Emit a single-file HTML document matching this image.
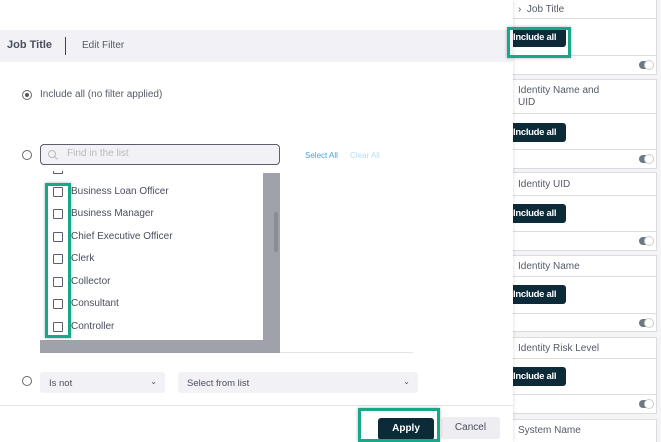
<!DOCTYPE html>
<html><head><meta charset="utf-8"><style>
*{box-sizing:border-box;margin:0;padding:0}
html,body{overflow:hidden}
body{width:661px;height:442px;background:#f4f4f6;font-family:"Liberation Sans",sans-serif;font-size:10px;color:#4a4e5e;position:relative}
.a{position:absolute}
.card{position:absolute;left:500px;width:157px;background:#fff;border:1px solid #dcdce0}
.row{border-bottom:1px solid #dcdce0;position:relative}
.row:last-child{border-bottom:none}
.btn{position:absolute;left:8px;background:#0c2a38;color:#fff;font-weight:bold;font-size:9.5px;border-radius:3px;padding:0 0 0 4px;height:19px;line-height:19px;width:57px;white-space:nowrap;letter-spacing:-0.3px;overflow:hidden}
.tg{position:absolute;right:3px;width:14px;height:8px;border-radius:4px;background:#6b7b80}
.tg:after{content:"";position:absolute;right:-1px;top:-1px;width:8px;height:8px;border-radius:50%;background:#fff;border:1px solid #ccc}
.ttl{font-size:10px;color:#555a68;padding-left:17px}
.cb{position:absolute;left:53px;width:10px;height:10px;border:1px solid #5a5e6e;border-radius:1px;background:#fff}
.it{position:absolute;left:71px;font-size:10px;color:#4a4e5e}
.hl{position:absolute;border:3px solid #17a88a;box-shadow:0 0 3px rgba(0,0,0,.3)}
</style></head><body>
<div class="a" style="left:484px;top:0;width:16px;height:442px;background:#ececef;border-left:1px solid #d8d8dc"></div>
<div class="a" style="left:496px;top:0;width:1px;height:30px;background:#d0d0d4"></div>

<div class="card" style="top:-1px;height:76px">
<div class="row" style="height:19px"><span class="ttl" style="line-height:19px">› &nbsp;Job Title</span></div>
<div class="row" style="height:37px"><div class="btn" style="top:9px">Include all</div></div>
<div class="row" style="height:18px"><div class="tg" style="top:5px"></div></div></div>

<div class="card" style="top:79px;height:90px">
<div class="row" style="height:34px"><div class="ttl" style="padding-top:5px;line-height:12px">Identity Name and<br>UID</div></div>
<div class="row" style="height:36px"><div class="btn" style="top:9px">Include all</div></div>
<div class="row" style="height:18px"><div class="tg" style="top:5px"></div></div></div>

<div class="card" style="top:172px;height:79px">
<div class="row" style="height:23px"><span class="ttl" style="line-height:23px">Identity UID</span></div>
<div class="row" style="height:36px"><div class="btn" style="top:8px">Include all</div></div>
<div class="row" style="height:18px"><div class="tg" style="top:5px"></div></div></div>

<div class="card" style="top:255px;height:77px">
<div class="row" style="height:21px"><span class="ttl" style="line-height:21px">Identity Name</span></div>
<div class="row" style="height:37px"><div class="btn" style="top:8px">Include all</div></div>
<div class="row" style="height:18px"><div class="tg" style="top:5px"></div></div></div>

<div class="card" style="top:337px;height:77px">
<div class="row" style="height:21px"><span class="ttl" style="line-height:21px">Identity Risk Level</span></div>
<div class="row" style="height:36px"><div class="btn" style="top:8px">Include all</div></div>
<div class="row" style="height:18px"><div class="tg" style="top:5px"></div></div></div>

<div class="card" style="top:419px;height:24px">
<div class="row" style="height:21px"><span class="ttl" style="line-height:21px">System Name</span></div></div>

<div class="a" style="left:0;top:0;width:513px;height:442px;background:#fff;box-shadow:1px 0 3px rgba(0,0,0,.1)"></div>
<div class="a" style="left:0;top:30px;width:513px;height:32px;background:#f2f2f6"></div>
<div class="a" style="left:7px;top:39px;font-weight:bold;font-size:11px;color:#4a4e5e">Job Title</div>
<div class="a" style="left:65px;top:37px;width:1px;height:18px;background:#444"></div>
<div class="a" style="left:82px;top:40px;font-size:10px;color:#555a68">Edit Filter</div>

<div class="a" style="left:22px;top:90px;width:10px;height:10px;border:1px solid #666;border-radius:50%"></div>
<div class="a" style="left:25px;top:93px;width:4px;height:4px;background:#555;border-radius:50%"></div>
<div class="a" style="left:40px;top:89px;font-size:10px;color:#555a68">Include all (no filter applied)</div>

<div class="a" style="left:22px;top:150px;width:10px;height:10px;border:1px solid #666;border-radius:50%"></div>
<div class="a" style="left:40px;top:144px;width:240px;height:21px;border:1px solid #5a5e6e;border-radius:4px;background:#f2f2f6"></div>
<svg class="a" style="left:47px;top:149px" width="12" height="12"><circle cx="5" cy="5" r="3.5" fill="none" stroke="#bbb"/><line x1="7.5" y1="7.5" x2="10.5" y2="10.5" stroke="#bbb"/></svg>
<div class="a" style="left:67px;top:148px;font-size:10px;color:#b8b8c0">Find in the list</div>
<div class="a" style="left:305px;top:151px;font-size:8px;color:#4aa3df">Select All</div>
<div class="a" style="left:350px;top:151px;font-size:8px;color:#b8dcf2">Clear All</div>

<div class="a" style="left:263px;top:173px;width:17px;height:168px;background:#a0a2aa"></div>
<div class="a" style="left:274px;top:212px;width:4px;height:40px;background:#8a8c94;border-radius:2px"></div>
<div class="a" style="left:40px;top:340px;width:240px;height:13px;background:#a0a2aa"></div>
<div class="a" style="left:280px;top:352px;width:133px;height:1px;background:#e4e4e8"></div>
<div class="a" style="left:53px;top:171px;width:10px;height:3px;border:1px solid #5a5e6e;border-top:none"></div>
<div class="cb" style="top:187px"></div><div class="it" style="top:186px">Business Loan Officer</div>
<div class="cb" style="top:209px"></div><div class="it" style="top:208px">Business Manager</div>
<div class="cb" style="top:232px"></div><div class="it" style="top:231px">Chief Executive Officer</div>
<div class="cb" style="top:254px"></div><div class="it" style="top:253px">Clerk</div>
<div class="cb" style="top:277px"></div><div class="it" style="top:276px">Collector</div>
<div class="cb" style="top:299px"></div><div class="it" style="top:298px">Consultant</div>
<div class="cb" style="top:322px"></div><div class="it" style="top:321px">Controller</div>

<div class="a" style="left:22px;top:376px;width:10px;height:10px;border:1px solid #666;border-radius:50%"></div>
<div class="a" style="left:40px;top:372px;width:125px;height:21px;background:#f2f2f6;border-radius:3px;padding:6px 0 0 9px;font-size:9.5px">Is not<span style="position:absolute;right:8px;top:5px;font-size:8px">⌄</span></div>
<div class="a" style="left:178px;top:372px;width:240px;height:21px;background:#f2f2f6;border-radius:3px;padding:6px 0 0 9px;font-size:9.5px">Select from list<span style="position:absolute;right:8px;top:5px;font-size:8px">⌄</span></div>
<div class="a" style="left:0;top:405px;width:513px;height:1px;background:#e4e4e8"></div>
<div class="a" style="left:378px;top:418px;width:56px;height:22px;background:#0c2a38;color:#fff;border-radius:3px;text-align:center;line-height:22px;font-weight:bold;font-size:10px">Apply</div>
<div class="a" style="left:441px;top:417px;width:59px;height:22px;background:#ededf2;border-radius:3px;text-align:center;line-height:22px;font-size:10px">Cancel</div>

<div class="hl" style="left:45px;top:183px;width:26px;height:155px"></div>
<div class="hl" style="left:358px;top:408px;width:82px;height:34px"></div>
<div class="hl" style="left:507px;top:27px;width:64px;height:31px"></div>
</body></html>
